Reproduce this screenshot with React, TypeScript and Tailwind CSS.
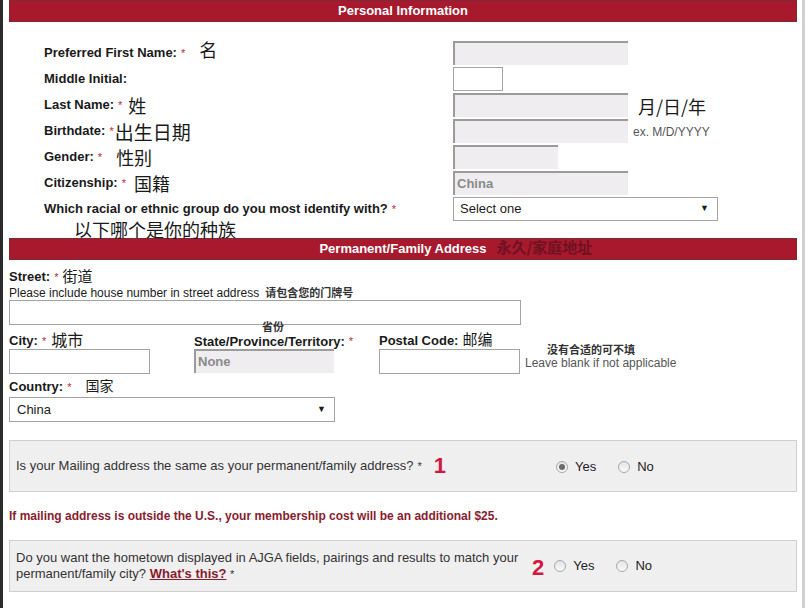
import type { ReactNode } from "react";

const cjk = "font-['Noto_Sans_CJK_SC',sans-serif]";

function SectionBar({ children }: { children: ReactNode }) {
  return (
    <div className="flex h-[22px] items-center justify-center border border-[#7b2a36] bg-[#a8192e] text-[13px] font-bold text-white">
      {children}
    </div>
  );
}

function Req() {
  return <span className="ml-[4px] text-[11px] font-normal text-[#c0263a] align-top">*</span>;
}

function GrayInput({ w, value }: { w: string; value?: string }) {
  return (
    <div className={`${w} flex h-[24px] items-center border-l-2 border-t-2 border-[#9b9b9b] bg-[#efedf0] pl-[2px] text-[13px] font-bold text-[#8a8a8a]`}>
      {value}
    </div>
  );
}

function Row({ label, req, note, children }: { label: string; req?: boolean; note?: ReactNode; children: ReactNode }) {
  return (
    <div className="flex h-[26px] items-center">
      <div className="flex w-[444px] items-center pl-[35px] text-[13px] font-bold text-[#1a1a1a]">
        <span>{label}</span>
        {req && <Req />}
        {note}
      </div>
      {children}
    </div>
  );
}

function Radio({ checked, label }: { checked?: boolean; label: string }) {
  return (
    <div className="flex items-center">
      <span className="flex h-[12px] w-[12px] items-center justify-center rounded-full border border-[#a8a8a8] bg-gradient-to-b from-[#e4e4e4] to-[#fafafa]">
        {checked && <span className="h-[6px] w-[6px] rounded-full bg-[#6b6b6b]" />}
      </span>
      <span className="ml-[7px] text-[13px] text-[#222]">{label}</span>
    </div>
  );
}

export default function App() {
  return (
    <div className="flex h-[608px] w-[805px] overflow-hidden bg-white font-['Liberation_Sans',Arial,sans-serif] text-[#1a1a1a]">
      <div className="w-[3px] shrink-0 bg-[#2b2b2b]" />
      <div className="ml-[6px] w-[788px] shrink-0">
        {/* Personal information */}
        <SectionBar>Personal Information</SectionBar>
        <div className="pt-[18px]">
          <Row label="Preferred First Name:" req note={<span className={`${cjk} ml-[14px] text-[18px] font-normal leading-none -mt-[8px]`}>名</span>}>
            <GrayInput w="w-[175px]" />
          </Row>
          <Row label="Middle Initial:">
            <div className="h-[24px] w-[50px] border border-[#a3a3a3] bg-white" />
          </Row>
          <Row label="Last Name:" req note={<span className={`${cjk} ml-[6px] text-[18px] font-normal leading-none`}>姓</span>}>
            <GrayInput w="w-[175px]" />
            <span className={`${cjk} ml-[10px] mt-[2px] text-[18px] leading-none`}>月/日/年</span>
          </Row>
          <Row label="Birthdate:" req note={<span className={`${cjk} ml-[1px] text-[19px] font-normal leading-none`}>出生日期</span>}>
            <GrayInput w="w-[175px]" />
            <span className="ml-[5px] mt-[2px] text-[12px] text-[#555]">ex. M/D/YYYY</span>
          </Row>
          <Row label="Gender:" req note={<span className={`${cjk} ml-[14px] text-[18px] font-normal leading-none`}>性别</span>}>
            <GrayInput w="w-[105px]" />
          </Row>
          <Row label="Citizenship:" req note={<span className={`${cjk} ml-[8px] text-[18px] font-normal leading-none`}>国籍</span>}>
            <GrayInput w="w-[175px]" value="China" />
          </Row>
          <Row label="Which racial or ethnic group do you most identify with?" req>
            <div className="flex h-[24px] w-[265px] items-center justify-between border border-[#a3a3a3] bg-white pl-[6px] pr-[8px] text-[13px]">
              <span>Select one</span>
              <span className="text-[9px]">▼</span>
            </div>
          </Row>
          <div className={`${cjk} h-[16px] pl-[65px] text-[18px] leading-[14px]`}>以下哪个是你的种族</div>
        </div>

        {/* Permanent / family address */}
        <SectionBar>
          <span className="relative">
            Permanent/Family Address
            <span className={`${cjk} absolute left-full top-[-3px] ml-[10px] whitespace-nowrap text-[15px] font-bold text-[#6e1222]`}>永久/家庭地址</span>
          </span>
        </SectionBar>

        <div>
          <div className="flex h-[25px] items-end pb-[2px] text-[13px] font-bold leading-none">
            <span>Street:</span>
            <Req />
            <span className={`${cjk} ml-[4px] text-[15px] font-normal`}>街道</span>
          </div>
          <div className="flex h-[15px] items-center text-[12px]">
            <span>Please include house number in street address</span>
            <span className={`${cjk} ml-[6px] text-[11px] font-bold text-[#333]`}>请包含您的门牌号</span>
          </div>
          <div className="h-[25px] w-[512px] border border-[#a3a3a3]" />

          <div className="flex">
            <div className="w-[185px]">
              <div className="flex h-[24px] items-end text-[13px] font-bold leading-[16px]">
                <span>City:</span>
                <Req />
                <span className={`${cjk} ml-[5px] text-[16px] font-normal leading-[20px]`}>城市</span>
              </div>
              <div className="h-[25px] w-[141px] border border-[#a3a3a3]" />
            </div>
            <div className="w-[185px]">
              <div className="relative flex h-[24px] items-end text-[13px] font-bold leading-[15px]">
                <span className={`${cjk} absolute left-[68px] top-[-4px] text-[11px] font-bold leading-[11px] text-[#333]`}>省份</span>
                <span>State/Province/Territory:</span>
                <Req />
              </div>
              <GrayInput w="w-[140px]" value="None" />
            </div>
            <div className="w-[146px]">
              <div className="flex h-[24px] items-end text-[13px] font-bold leading-[16px]">
                <span>Postal Code:</span>
                <span className={`${cjk} ml-[4px] text-[15px] font-normal leading-[20px]`}>邮编</span>
              </div>
              <div className="h-[25px] w-[141px] border border-[#a3a3a3]" />
            </div>
            <div className="flex flex-col pt-[18px]">
              <span className={`${cjk} ml-[22px] text-[11px] font-bold leading-[13px] text-[#333]`}>没有合适的可不填</span>
              <span className="text-[12px] leading-[14px] text-[#555]">Leave blank if not applicable</span>
            </div>
          </div>

          <div className="flex h-[23px] items-end pb-[2px] text-[13px] font-bold leading-[16px]">
            <span>Country:</span>
            <Req />
            <span className={`${cjk} ml-[14px] text-[14px] font-normal leading-[20px]`}>国家</span>
          </div>
          <div className="flex h-[25px] w-[326px] items-center justify-between border border-[#a3a3a3] pl-[7px] pr-[8px] text-[13px]">
            <span>China</span>
            <span className="text-[9px]">▼</span>
          </div>
        </div>

        {/* Mailing question */}
        <div className="mt-[18px] flex h-[52px] items-center border border-[#cfcfcf] bg-[#f0eff0] pl-[6px] text-[13px] text-[#333]">
          <div className="flex w-[540px] items-center">
            <span>Is your Mailing address the same as your permanent/family address?</span>
            <span className="ml-[4px] text-[11px]">*</span>
            <span className="ml-[12px] text-[22px] font-bold leading-none text-[#d4173f]">1</span>
          </div>
          <div className="mt-[2px] flex gap-[22px]">
            <Radio checked label="Yes" />
            <Radio label="No" />
          </div>
        </div>

        <div className="flex h-[48px] items-center text-[12px] font-bold text-[#8a1c2e]">
          If mailing address is outside the U.S., your membership cost will be an additional $25.
        </div>

        <div className="flex h-[52px] items-center border border-[#cfcfcf] bg-[#f0eff0] pl-[6px] text-[13px] leading-[16px] text-[#333]">
          <div className="w-[516px]">
            Do you want the hometown displayed in AJGA fields, pairings and results to match your permanent/family city?{" "}
            <span className="font-bold text-[#8a1c2e] underline">What's this?</span>{" "}
            <span className="text-[11px]">*</span>
          </div>
          <span className="mr-[10px] mt-[4px] text-[22px] font-bold leading-none text-[#d4173f]">2</span>
          <div className="flex gap-[22px]">
            <Radio label="Yes" />
            <Radio label="No" />
          </div>
        </div>
      </div>
      <div className="ml-auto w-[3px] shrink-0 bg-[#d0d0d0]" />
    </div>
  );
}
